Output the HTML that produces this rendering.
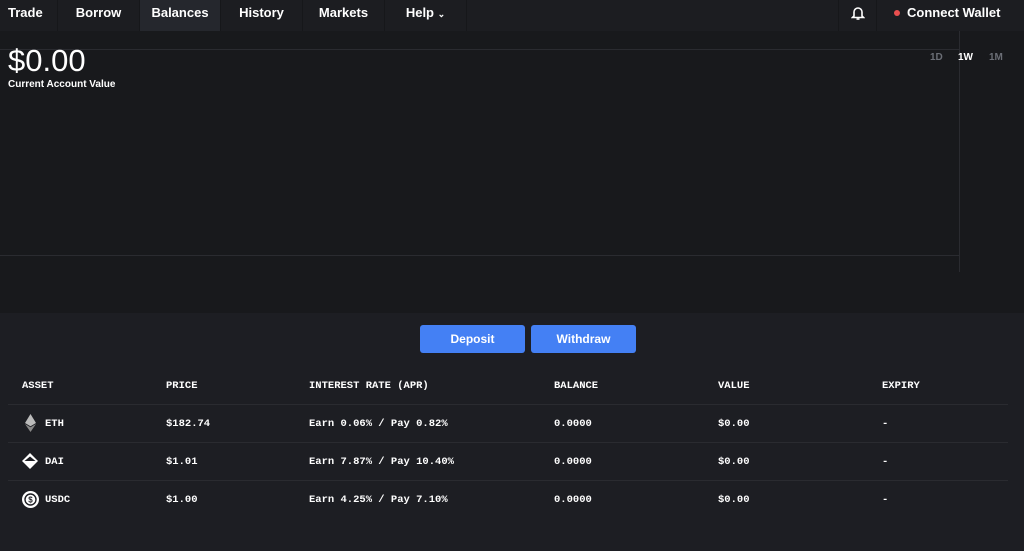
<!DOCTYPE html>
<html><head><meta charset="utf-8"><style>
*{margin:0;padding:0;box-sizing:border-box}
body{width:1024px;height:551px;overflow:hidden;background:#1d1e23;font-family:"Liberation Sans",sans-serif;color:#fff;position:relative}
.nav{position:absolute;left:0;top:0;width:1024px;height:31px;background:#1c1d21}
.nav .it{position:absolute;top:0;height:31px;line-height:25px;font-size:13px;font-weight:bold;text-align:center;border-right:1px solid #16171a}
.chart{position:absolute;left:0;top:31px;width:1024px;height:282px;background:#18191c}
.hl{position:absolute;height:1px;background:#2a2b30}
.vl{position:absolute;width:1px;background:#2a2b30}
.btn{position:absolute;top:325px;width:105px;height:28px;background:#4480f4;border-radius:3px;font-size:12px;font-weight:bold;text-align:center;line-height:29px}
.m{font-family:"Liberation Mono",monospace;font-size:10.5px;font-weight:bold;position:absolute}
.row{position:absolute;left:8px;width:1000px;height:1px;background:#2a2b30}
</style></head><body>
<div class="nav">
<div class="it" style="left:0;width:58px;text-align:left;padding-left:8px">Trade</div>
<div class="it" style="left:58px;width:82px">Borrow</div>
<div class="it" style="left:140px;width:81px;background:#25272d">Balances</div>
<div class="it" style="left:221px;width:82px">History</div>
<div class="it" style="left:303px;width:82px">Markets</div>
<div class="it" style="left:385px;width:82px">Help <span style="font-size:9px">&#8964;</span></div>
<div class="it" style="left:838px;width:39px;border-left:1px solid #16171a;border-right:1px solid #16171a">
<svg width="14" height="16" viewBox="0 0 14 16" style="margin-top:5px"><path d="M3 11V7a4 4 0 0 1 8 0v4l1.5 1.5h-11z" fill="none" stroke="#fff" stroke-width="1.6"/><path d="M5.5 14h3" stroke="#fff" stroke-width="1.6"/></svg></div>
<div style="position:absolute;left:894px;top:10px;width:6px;height:6px;border-radius:50%;background:#e94f4f"></div>
<div style="position:absolute;left:907px;top:0;line-height:25px;font-size:13px;font-weight:bold">Connect Wallet</div>
</div>
<div class="chart"></div>
<div class="hl" style="left:0;top:49px;width:959px"></div>
<div class="hl" style="left:0;top:255px;width:959px"></div>
<div class="vl" style="left:959px;top:31px;height:241px"></div>
<div style="position:absolute;left:8px;top:43px;font-size:31px">$0.00</div>
<div style="position:absolute;left:8px;top:79px;font-size:10px;font-weight:bold">Current Account Value</div>
<div style="position:absolute;left:930px;top:52px;font-size:10px;font-weight:bold;color:#6b6e76">1D</div>
<div style="position:absolute;left:958px;top:52px;font-size:10px;font-weight:bold">1W</div>
<div style="position:absolute;left:989px;top:52px;font-size:10px;font-weight:bold;color:#6b6e76">1M</div>
<div class="btn" style="left:420px">Deposit</div>
<div class="btn" style="left:531px">Withdraw</div>
<div class="m" style="left:22px;top:380px">ASSET</div>
<div class="m" style="left:166px;top:380px">PRICE</div>
<div class="m" style="left:309px;top:380px">INTEREST RATE (APR)</div>
<div class="m" style="left:554px;top:380px">BALANCE</div>
<div class="m" style="left:718px;top:380px">VALUE</div>
<div class="m" style="left:882px;top:380px">EXPIRY</div>
<div class="row" style="top:404px"></div>
<div class="row" style="top:442px"></div>
<div class="row" style="top:480px"></div>
<svg style="position:absolute;left:25px;top:414px" width="11" height="18" viewBox="0 0 11 18"><path d="M5.5 0L0 9l5.5 3.3L11 9z" fill="#bbb"/><path d="M5.5 13.3L0 10l5.5 8L11 10z" fill="#888"/></svg>
<svg style="position:absolute;left:22px;top:453px" width="16" height="16" viewBox="0 0 16 16"><path d="M8 0L16 8L8 16L0 8z" fill="#fff"/><path d="M2.5 8L8 3.5l5.5 4.5z" fill="#1d1e23"/></svg>
<svg style="position:absolute;left:22px;top:491px" width="17" height="17" viewBox="0 0 17 17"><circle cx="8.5" cy="8.5" r="8.5" fill="#fff"/><circle cx="8.5" cy="8.5" r="5.5" fill="none" stroke="#1d1e23" stroke-width="1.4"/><text x="8.5" y="11.5" font-size="8" font-weight="bold" text-anchor="middle" fill="#1d1e23" font-family="Liberation Sans">$</text></svg>
<div class="m" style="left:45px;top:418px">ETH</div><div class="m" style="left:166px;top:418px">$182.74</div><div class="m" style="left:309px;top:418px">Earn 0.06% / Pay 0.82%</div><div class="m" style="left:554px;top:418px">0.0000</div><div class="m" style="left:718px;top:418px">$0.00</div><div class="m" style="left:882px;top:418px">-</div>
<div class="m" style="left:45px;top:456px">DAI</div><div class="m" style="left:166px;top:456px">$1.01</div><div class="m" style="left:309px;top:456px">Earn 7.87% / Pay 10.40%</div><div class="m" style="left:554px;top:456px">0.0000</div><div class="m" style="left:718px;top:456px">$0.00</div><div class="m" style="left:882px;top:456px">-</div>
<div class="m" style="left:45px;top:494px">USDC</div><div class="m" style="left:166px;top:494px">$1.00</div><div class="m" style="left:309px;top:494px">Earn 4.25% / Pay 7.10%</div><div class="m" style="left:554px;top:494px">0.0000</div><div class="m" style="left:718px;top:494px">$0.00</div><div class="m" style="left:882px;top:494px">-</div>
</body></html>
